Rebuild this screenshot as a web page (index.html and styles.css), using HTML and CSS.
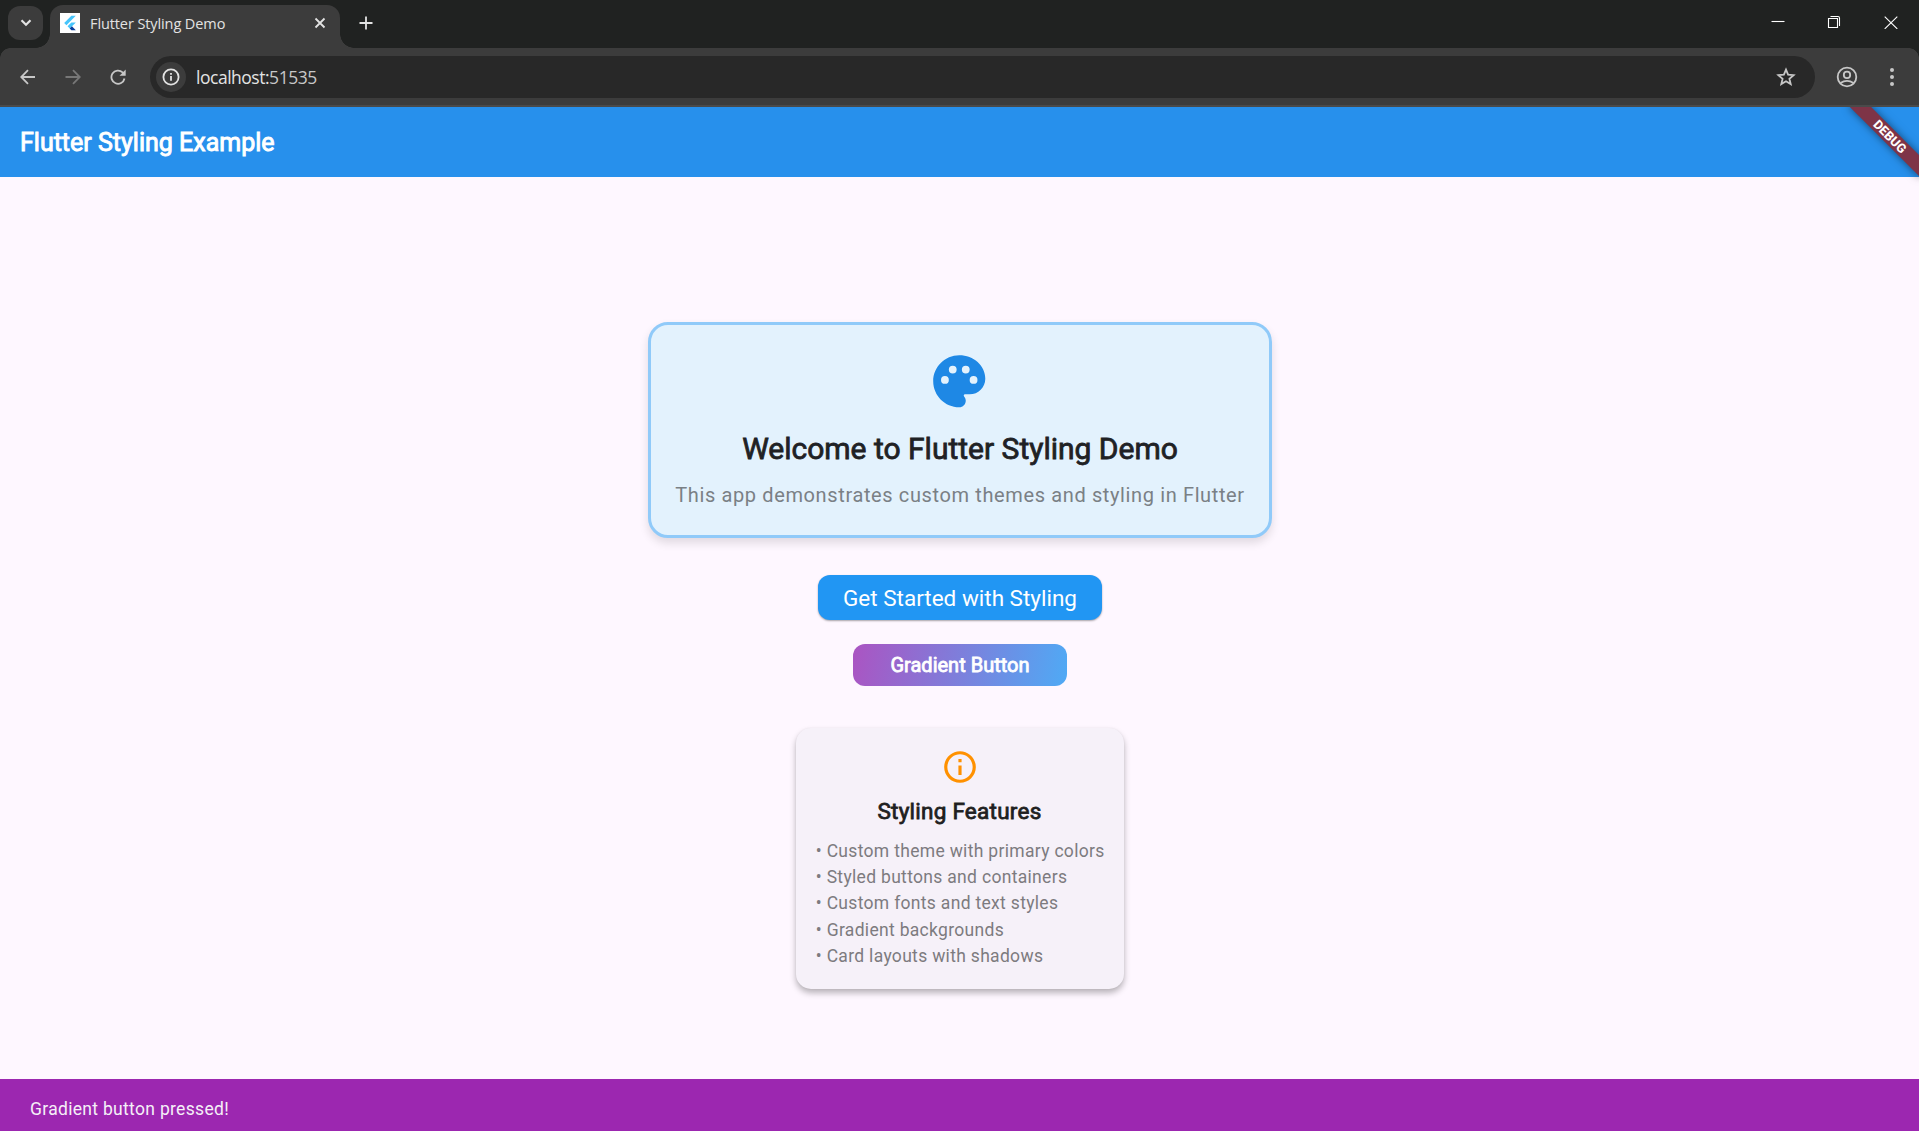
FILE: index.html
```html
<!DOCTYPE html>
<html lang="en">
<head>
<meta charset="utf-8">
<title>Flutter Styling Demo</title>
<link rel="stylesheet" href="styles.css">
</head>
<body>
<header class="tabstrip">
  <button class="tab-search" aria-label="Search tabs"><svg width="12" height="8" viewBox="0 0 12 8"><path d="M1.500 1.200 6 5.700l4.500-4.500" class="line bold"/></svg></button>
  <div class="tab">
    <svg class="favicon" width="20" height="20" viewBox="0 0 20 20"><path fill="#fff" d="M0 0h20v20H0z"/><g transform="translate(2.800 2.800) scale(.6)"><path fill="#47c5fb" d="M14.314 0 2.300 12 6 15.700 21.684.013zM14.328 11.072 7.857 17.530l3.700 3.700L21.700 11.072z"/><path fill="#0a3f9c" d="m11.557 21.230 2.770 2.770H21.700l-6.460-6.468z"/></g></svg>
    <span class="tab-title">Flutter Styling Demo</span>
    <svg class="tab-close" width="12" height="12" viewBox="0 0 12 12"><path d="m1.500 1.500 9 9m0-9-9 9" class="line"/></svg>
  </div>
  <svg class="new-tab" width="14" height="14" viewBox="0 0 14 14"><path d="M7 .5v13M.5 7h13" class="line"/></svg>
  <div class="window-controls">
    <svg width="14" height="14" viewBox="0 0 14 14"><path d="M.5 6.500h13" class="thin"/></svg>
    <svg class="restore" width="14" height="14" viewBox="0 0 14 14"><path d="M1.500 3.500h9v9h-9zM3.500 1.500H11q1.500 0 1.500 1.500v8" class="thin"/></svg>
    <svg width="14" height="14" viewBox="0 0 14 14"><path d="m.7 1.700 12.600 12.200m0-12.200L.7 13.900" class="thin"/></svg>
  </div>
</header>
<nav class="toolbar">
  <svg width="16" height="16" viewBox="0 0 16 16"><path d="M15 8H1.500M8 1.200 1.200 8 8 14.800" class="line"/></svg>
  <svg class="disabled" width="16" height="16" viewBox="0 0 16 16"><path d="M.5 8h14M8 1.200 14.800 8 8 14.800" class="line"/></svg>
  <svg class="reload" width="16" height="16" viewBox="0 0 16 16"><path d="M14.500 9.500A6.600 6.600 0 1 1 12.600 3.400L14 4.800" class="line"/><path fill="currentColor" d="M15.700.5v6.200H9.500z"/></svg>
  <div class="omnibox">
    <span class="site-info"><svg width="18" height="18" viewBox="0 0 18 18"><circle cx="9" cy="9" r="7.600" class="line"/><path d="M9 8v4.800M9 5v1.800" class="line"/></svg></span>
    <span class="url">localhost:<span class="port">51535</span></span>
    <svg class="star" width="20" height="20" viewBox="0 0 20 20"><path d="m10 2.600 2.100 5 5.500.5-4.200 3.600 1.300 5.400-4.700-2.900-4.700 2.900 1.300-5.400L2.400 8.100l5.500-.5z" class="line"/></svg>
  </div>
  <svg class="profile" width="22" height="22" viewBox="0 0 22 22"><circle cx="11" cy="11" r="9.300" class="line"/><circle cx="11" cy="8.900" r="3.200" class="line"/><path d="M4.500 17q6.500-4.400 13 0" class="line"/></svg>
  <svg class="menu" width="6" height="20" viewBox="0 0 6 20"><g fill="#c7c7c7"><circle cx="3" cy="3" r="2"/><circle cx="3" cy="10" r="2"/><circle cx="3" cy="17" r="2"/></g></svg>
</nav>
<div class="appbar"><h1 class="appbar-title">Flutter Styling Example</h1></div>
<div class="banner-clip"><div class="debug-banner">DEBUG</div></div>
<main class="content">
  <section class="welcome">
    <svg class="palette" width="62.500" height="62.500" viewBox="0 0 24 24"><path fill="#1e88e5" fill-rule="evenodd" d="M12 2C6.490 2 2 6.490 2 12s4.490 10 10 10c1.380 0 2.500-1.120 2.500-2.500 0-.61-.23-1.200-.64-1.670-.08-.1-.13-.21-.13-.33 0-.28.22-.5.5-.5H16c3.310 0 6-2.690 6-6 0-4.960-4.490-9-10-9zM19 11.500a1.500 1.500 0 1 1-3 0 1.500 1.500 0 0 1 3 0zM16 7.500a1.500 1.500 0 1 1-3 0 1.500 1.500 0 0 1 3 0zM11 7.500a1.500 1.500 0 1 1-3 0 1.500 1.500 0 0 1 3 0zM8 11.500a1.500 1.500 0 1 1-3 0 1.500 1.500 0 0 1 3 0z"/></svg>
    <h2 class="welcome-title">Welcome to Flutter Styling Demo</h2>
    <p class="welcome-text">This app demonstrates custom themes and styling in Flutter</p>
  </section>
  <button class="btn primary">Get Started with Styling</button>
  <button class="btn gradient">Gradient Button</button>
  <section class="features">
    <svg class="info" width="38" height="38" viewBox="0 0 24 24"><path fill="#ff9100" d="M11 7h2v2h-2zm0 4h2v6h-2zm1-9C6.480 2 2 6.480 2 12s4.480 10 10 10 10-4.480 10-10S17.520 2 12 2zm0 18c-4.410 0-8-3.590-8-8s3.590-8 8-8 8 3.590 8 8-3.590 8-8 8z"/></svg>
    <h3 class="features-title">Styling Features</h3>
    <div class="features-list"><div>• Custom theme with primary colors</div><div>• Styled buttons and containers</div><div>• Custom fonts and text styles</div><div>• Gradient backgrounds</div><div>• Card layouts with shadows</div></div>
  </section>
</main>
<footer class="snackbar">Gradient button pressed!</footer>
</body>
</html>
```
FILE: styles.css
```css
* { box-sizing: border-box; }
body { margin: 0; width: 1919px; height: 1131px; overflow: hidden; display: flex; flex-direction: column; background: #fef7ff; font-family: Roboto, sans-serif; position: relative; }
h1, h2, h3, p { margin: 0; font-weight: 400; }
button { border: 0; padding: 0; font-family: inherit; }
svg { display: block; flex: none; }
.line { fill: none; stroke: currentColor; stroke-width: 1.8; }
.line.bold { stroke-width: 2.2; }
.thin { fill: none; stroke: #fff; stroke-width: 1.1; }

.tabstrip { height: 48px; flex: none; background: #202221; display: flex; padding-left: 8px; color: #e3e3e3; }
.tab-search { width: 35px; height: 34px; margin: 6px 7px 0 0; border-radius: 12px; background: #3c3c3c; color: inherit; display: flex; align-items: center; justify-content: center; }
.tab { width: 290px; height: 43px; margin-top: 5px; padding: 8px 14px 0 10px; border-radius: 13px 13px 0 0; background: #3c3c3c; display: flex; position: relative; }
.tab::before, .tab::after { content: ""; position: absolute; bottom: 0; width: 14px; height: 14px; }
.tab::before { left: -14px; background: radial-gradient(circle at 0 0, transparent 13.500px, #3c3c3c 14px); }
.tab::after { right: -14px; background: radial-gradient(circle at 100% 0, transparent 13.500px, #3c3c3c 14px); }
.tab-title { margin-left: 10px; font: 14.500px/22px "Open Sans", sans-serif; letter-spacing: -.1px; white-space: nowrap; }
.tab-close { margin: 4px 0 0 auto; }
.new-tab { margin: 16px 0 0 19px; }
.window-controls { margin: 15px 21px 0 auto; display: flex; gap: 43px; }
.restore { margin-left: -1px; }

.toolbar { height: 59px; flex: none; background: #3c3c3c; border-bottom: 2px solid #4a4a4a; display: flex; align-items: center; padding: 0 24px 0 20px; color: #c7c7c7; position: relative; }
.toolbar::before, .toolbar::after { content: ""; position: absolute; top: 0; width: 10px; height: 10px; }
.toolbar::before { left: 0; background: radial-gradient(circle at 100% 100%, transparent 9.500px, #202221 10px); }
.toolbar::after { right: 0; background: radial-gradient(circle at 0 100%, transparent 9.500px, #202221 10px); }
.disabled { margin-left: 29px; color: #777; }
.reload { margin-left: 28.500px; }
.omnibox { width: 1665px; height: 42px; margin: 1px 0 0 24.500px; padding: 0 19.500px 0 6px; border-radius: 21px; background: #282828; display: flex; align-items: center; color: #e3e3e3; }
.site-info { width: 30px; height: 30px; border-radius: 50%; background: #3c3c3c; display: flex; align-items: center; justify-content: center; }
.url { margin-left: 10px; font: 17.500px/24px "Open Sans", sans-serif; letter-spacing: -.48px; }
.port { color: #c7c7c7; }
.star { margin-left: auto; color: #c7c7c7; }
.profile { margin-left: 21px; }
.menu { margin-left: auto; }

.appbar { height: 70px; flex: none; background: #2790ec; padding-left: 20px; display: flex; align-items: center; }
.appbar-title { font-size: 25px; color: #fff; -webkit-text-stroke: .9px #fff; }
.banner-clip { position: absolute; top: 107px; right: 0; width: 110px; height: 100px; overflow: hidden; }
.debug-banner { position: absolute; left: 31px; top: 22px; width: 100px; height: 15px; transform: rotate(45deg); background: #7e3447; box-shadow: 0 0 8px rgba(0,0,0,.5); color: #fff; font-size: 12.750px; font-weight: 800; line-height: 15px; text-align: center; }

.content { flex: 1; display: flex; flex-direction: column; align-items: center; padding-top: 145px; }
.welcome { width: 624px; height: 216px; border: 3px solid #90caf9; border-radius: 20px; background: #e3f2fd; box-shadow: 0 5px 10px rgba(0,0,0,.12); display: flex; flex-direction: column; align-items: center; padding-top: 24.500px; }
.welcome-title { margin: 19px 0 0 1px; font-size: 30px; line-height: 35px; color: #202124; -webkit-text-stroke: .8px #202124; white-space: nowrap; }
.welcome-text { margin: 17px 0 0 1px; font-size: 20px; line-height: 24px; letter-spacing: .625px; color: #7a8085; white-space: nowrap; }
.btn { display: flex; align-items: center; justify-content: center; color: #fff; }
.primary { width: 284px; height: 45px; margin-top: 37px; padding: 1px 0 0 1px; border-radius: 12px; background: #2196f3; font-size: 22.500px; box-shadow: 0 1px 2px rgba(0,0,0,.35); }
.gradient { width: 214px; height: 41.500px; margin-top: 24px; padding-left: 1px; border-radius: 12px; background: linear-gradient(101deg, #ab54c2, #4faaf5); font-size: 20px; -webkit-text-stroke: .8px #fff; }
.features { width: 328px; height: 261.500px; margin-top: 42px; border-radius: 15px; background: #f6f1f9; box-shadow: 0 4px 6px rgba(0,0,0,.28), 0 0 2px rgba(0,0,0,.06); padding: 20.500px 20px; }
.info { margin: 0 auto; }
.features-title { margin-top: 11px; text-align: center; font-size: 22.500px; line-height: 28px; letter-spacing: .25px; color: #1f1f21; -webkit-text-stroke: .8px #1f1f21; }
.features-list { margin: 12.800px 0 0 .3px; font-size: 17.500px; line-height: 26.250px; letter-spacing: .3125px; color: #7d7b7f; white-space: nowrap; }
.snackbar { height: 52px; flex: none; background: #9c27b0; padding: 19px 30px 0; color: #f5eff7; font-size: 17.500px; line-height: 22px; letter-spacing: .3125px; }
```
